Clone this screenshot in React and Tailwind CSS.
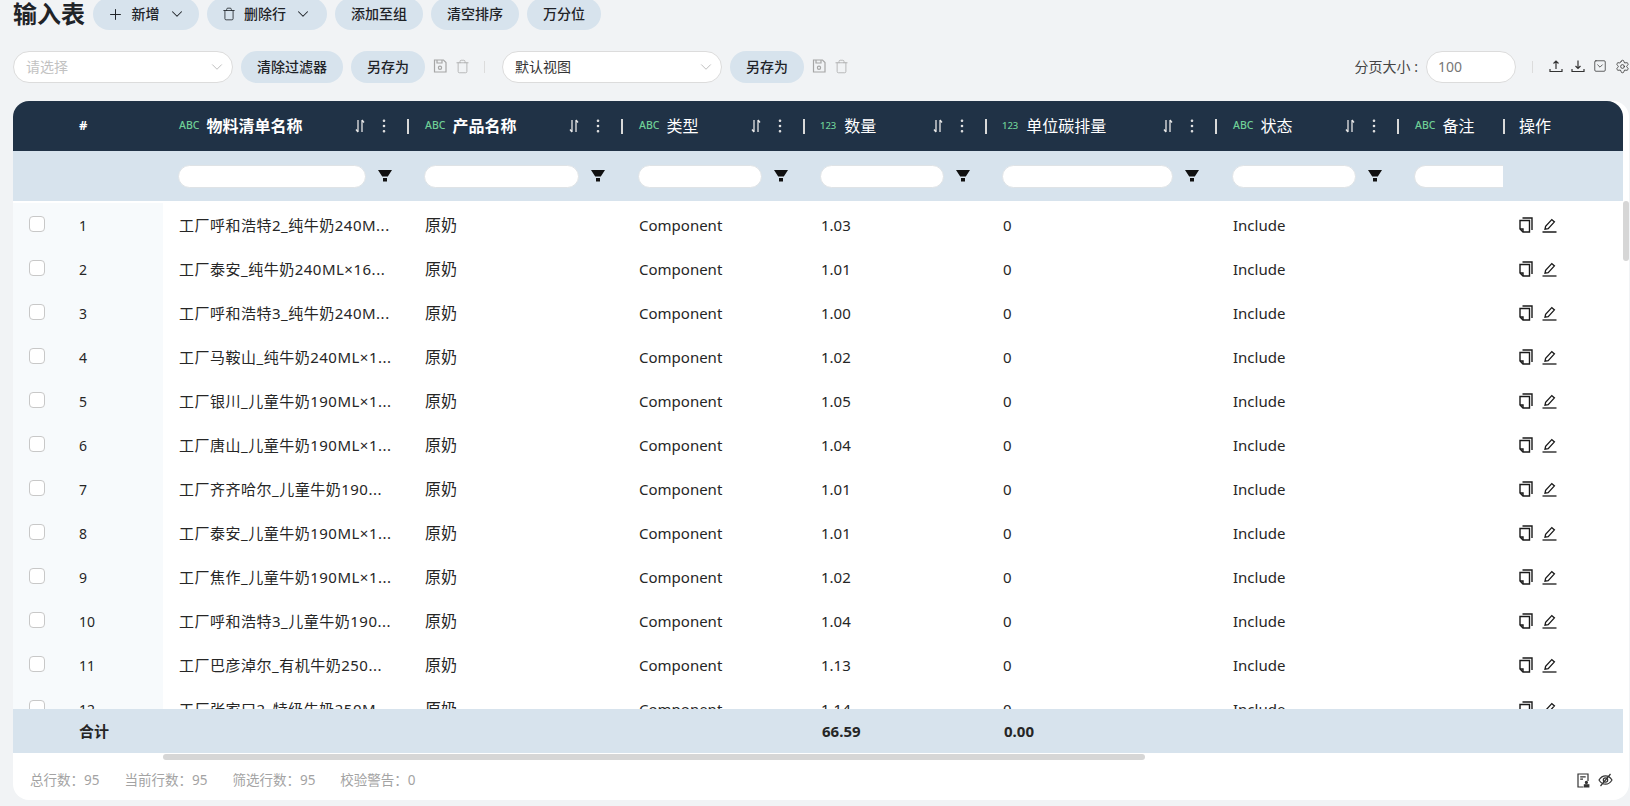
import { Plus, ChevronDown, Trash, SquareChevronDown, Settings, EllipsisVertical } from 'lucide-react';

const font = "font-['Noto_Sans','Noto_Sans_CJK_SC',sans-serif]";

const columns = [
  { name: '物料清单名称', tag: 'ABC', width: 'w-[246px]', input: 'w-[188px]', bold: true },
  { name: '产品名称', tag: 'ABC', width: 'w-[214px]', input: 'w-[155px]', bold: true },
  { name: '类型', tag: 'ABC', width: 'w-[182px]', input: 'w-[124px]' },
  { name: '数量', tag: '123', width: 'w-[182px]', input: 'w-[124px]' },
  { name: '单位碳排量', tag: '123', width: 'w-[230px]', input: 'w-[171px]' },
  { name: '状态', tag: 'ABC', width: 'w-[182px]', input: 'w-[124px]' },
];

const rows = [
  ['工厂呼和浩特2_纯牛奶240M...', '1.03'],
  ['工厂泰安_纯牛奶240ML×16...', '1.01'],
  ['工厂呼和浩特3_纯牛奶240M...', '1.00'],
  ['工厂马鞍山_纯牛奶240ML×1...', '1.02'],
  ['工厂银川_儿童牛奶190ML×1...', '1.05'],
  ['工厂唐山_儿童牛奶190ML×1...', '1.04'],
  ['工厂齐齐哈尔_儿童牛奶190...', '1.01'],
  ['工厂泰安_儿童牛奶190ML×1...', '1.01'],
  ['工厂焦作_儿童牛奶190ML×1...', '1.02'],
  ['工厂呼和浩特3_儿童牛奶190...', '1.04'],
  ['工厂巴彦淖尔_有机牛奶250...', '1.13'],
  ['工厂张家口2_特级牛奶250M...', '1.14'],
];

const SaveIcon = () => (
  <svg width="14" height="14" viewBox="0 0 14 14" fill="none" stroke="currentColor" strokeWidth="1.2">
    <path d="M1.5 1h9l2.5 2.5V13H1.500z" />
    <path d="M4 1v3h5V1" />
    <circle cx="7" cy="8.700" r="1.600" />
  </svg>
);

const UploadIcon = () => (
  <svg width="14" height="14" viewBox="0 0 14 14" fill="none" stroke="currentColor" strokeWidth="1.2">
    <path d="M7 10V2M4.500 4.500 7 2l2.500 2.500M1 10v2.500h12V10" />
  </svg>
);

const DownloadIcon = () => (
  <svg width="14" height="14" viewBox="0 0 14 14" fill="none" stroke="currentColor" strokeWidth="1.2">
    <path d="M7 1.500v8M4.500 7 7 9.500 9.500 7M1 10v2.500h12V10" />
  </svg>
);

const SortIcon = () => (
  <svg width="12" height="14" viewBox="0 0 12 14" fill="none" stroke="#e6e6e6" strokeWidth="1.300">
    <path d="M4 1v12M4 13l-2-2.500M8 13V1M8 1l2 2.500" />
  </svg>
);

const FunnelIcon = () => (
  <svg width="14" height="12" viewBox="0 0 14 12" fill="#111">
    <path d="M0 0h14L9.800 6.500H4.200zM5 8h4v3.500H5z" />
  </svg>
);

const CopyIcon = () => (
  <svg width="14" height="16" viewBox="0 0 14 16" fill="none" stroke="#1a1a1a" strokeWidth="1.400">
    <path d="M3.500 1H13v12M1 3.500h9.500V15H4l-3-3z" />
    <path d="M1 12h3v3" />
  </svg>
);

const EditIcon = () => (
  <svg width="15" height="15" viewBox="0 0 15 15" fill="none" stroke="#1a1a1a" strokeWidth="1.300">
    <path d="M0.500 14h14" />
    <path d="M3 11.200 3.600 8.400 9.800 1.600l2.600 2.300-6.200 6.700z" />
  </svg>
);

const StampIcon = () => (
  <svg width="13" height="15" viewBox="0 0 13 15" fill="none" stroke="#333" strokeWidth="1.200">
    <path d="M6.500 14H1V1h10v7" />
    <path d="M3.200 3.800h5.500M3.200 6.200h2.800" />
    <circle cx="9.400" cy="9.400" r="1" fill="#333" />
    <path d="M7.400 11.800h4.400V14H7.400z" fill="#333" />
  </svg>
);

const HideIcon = () => (
  <svg width="15" height="14" viewBox="0 0 15 14" fill="none" stroke="#333" strokeWidth="1.200">
    <path d="M1 7c1.700-2.800 3.800-4.200 6.500-4.200S12.300 4.200 14 7c-1.700 2.800-3.800 4.200-6.500 4.200S2.700 9.800 1 7z" />
    <circle cx="7.500" cy="7" r="2.200" />
    <path d="M12.500 1 2.500 13" />
  </svg>
);

function PillButton({ children, className = '' }) {
  return (
    <button className={`h-8 rounded-2xl bg-[#d7e3ed] text-sm font-medium text-[#1f2328] flex items-center justify-center shrink-0 ${className}`}>
      {children}
    </button>
  );
}

function SelectBox({ text, muted, className = '' }) {
  return (
    <div className={`h-8 rounded-2xl bg-white border border-[#dcdcdc] flex items-center justify-between pl-3 pr-[6px] shrink-0 ${className}`}>
      <span className={`text-sm ${muted ? 'text-[#c2c2c2]' : 'text-[#333]'}`}>{text}</span>
      <ChevronDown size={18} strokeWidth={1} className="text-[#aaa]" />
    </div>
  );
}

function Tag({ label }) {
  if (label === 'ABC') {
    return <span className="text-[10.500px] font-medium text-[#6fcf97] mr-[7px]">ABC</span>;
  }
  return <span className="text-[9.500px] font-medium text-[#6fcf97] mr-2 -ml-px">{label}</span>;
}

function HeaderCell({ col }) {
  return (
    <div className={`${col.width} h-full shrink-0 flex items-center pl-4 relative`}>
      <Tag label={col.tag} />
      <span className={`text-base text-white ${col.bold ? 'font-bold' : ''}`}>{col.name}</span>
      <div className="absolute right-0 inset-y-0 flex items-center gap-[9px]">
        <SortIcon />
        <EllipsisVertical size={18} strokeWidth={1.5} className="text-[#e6e6e6]" />
        <div className="w-[2px] h-[15px] bg-[#d9d9d9] ml-[5px]" />
      </div>
    </div>
  );
}

function FilterCell({ col }) {
  return (
    <div className={`${col.width} shrink-0 flex items-center pl-[15px] gap-3`}>
      <div className={`${col.input} h-[23px] rounded-full bg-white border border-[#dfe3e6]`} />
      <FunnelIcon />
    </div>
  );
}

function Row({ name, qty, index }) {
  return (
    <div className="h-11 flex items-center text-[15px] text-[#262626] shrink-0">
      <div className="w-[150px] h-full bg-[#f7fafc] flex items-center pl-4 shrink-0">
        <div className="w-4 h-4 rounded-[4px] border border-[#c8c8c8] bg-white -mt-[2px]" />
        <span className="ml-[34px] mt-[1px] text-sm">{index}</span>
      </div>
      <div className="w-[246px] pl-4 shrink-0 whitespace-nowrap overflow-hidden tracking-[0.5px]">{name}</div>
      <div className="w-[214px] pl-4 shrink-0 text-base">原奶</div>
      <div className="w-[182px] pl-4 shrink-0">Component</div>
      <div className="w-[182px] pl-4 shrink-0">{qty}</div>
      <div className="w-[230px] pl-4 shrink-0">0</div>
      <div className="w-[182px] pl-4 shrink-0">Include</div>
      <div className="w-[104px] shrink-0" />
      <div className="flex items-center gap-[9px] pl-4">
        <CopyIcon />
        <EditIcon />
      </div>
    </div>
  );
}

export default function App() {
  return (
    <div className={`${font} w-[1630px] h-[806px] bg-[#f1f3f5] overflow-hidden flex flex-col pl-[13px]`}>
      {/* top actions */}
      <div className="h-8 -mt-[2px] flex items-center gap-2 shrink-0">
        <h1 className="text-2xl leading-7 font-bold text-[#1f2328] whitespace-nowrap">输入表</h1>
        <PillButton className="w-[106px] gap-2">
          <Plus size={17} strokeWidth={1.4} />
          <span>新增</span>
          <ChevronDown size={18} strokeWidth={1.4} />
        </PillButton>
        <PillButton className="w-[120px] gap-2">
          <Trash size={14} strokeWidth={1.4} />
          <span>删除行</span>
          <ChevronDown size={18} strokeWidth={1.4} />
        </PillButton>
        <PillButton className="w-[88px]">添加至组</PillButton>
        <PillButton className="w-[88px]">清空排序</PillButton>
        <PillButton className="w-[74px]">万分位</PillButton>
      </div>

      {/* filters */}
      <div className="h-8 mt-[21px] flex items-center shrink-0">
        <SelectBox text="请选择" muted className="w-[220px]" />
        <PillButton className="w-[102px] ml-2">清除过滤器</PillButton>
        <PillButton className="w-[74px] ml-2">另存为</PillButton>
        <div className="flex items-center gap-2 ml-2 -mt-[2px] text-[#a6a6a6]">
          <SaveIcon />
          <Trash size={15} strokeWidth={1.2} />
        </div>
        <div className="w-px h-3 bg-[#dcdcdc] ml-[14px]" />
        <SelectBox text="默认视图" className="w-[220px] ml-[17px]" />
        <PillButton className="w-[74px] ml-2">另存为</PillButton>
        <div className="flex items-center gap-2 ml-2 -mt-[2px] text-[#a6a6a6]">
          <SaveIcon />
          <Trash size={15} strokeWidth={1.2} />
        </div>
        <div className="flex-1" />
        <span className="text-sm text-[#444]">分页大小 :</span>
        <div className="w-[90px] h-8 rounded-2xl bg-white border border-[#dcdcdc] flex items-center pl-[11px] ml-2 text-sm text-[#777]">100</div>
        <div className="w-px h-3 bg-[#dcdcdc] ml-4" />
        <div className="flex items-center gap-2 ml-4 pr-[1px] -mt-[2px] text-[#333]">
          <UploadIcon />
          <DownloadIcon />
          <SquareChevronDown size={14} strokeWidth={1.3} />
          <Settings size={15} strokeWidth={1.3} className="-mr-px" />
        </div>
      </div>

      {/* table card */}
      <div className="mt-[18px] w-[1616px] h-[699px] bg-white rounded-2xl flex flex-col overflow-hidden shrink-0">
        <div className="w-[1610px] h-[50px] bg-[#203246] flex items-center shrink-0 rounded-tr-2xl">
          <div className="w-[150px] shrink-0 pl-[66px] text-[13px] font-bold text-white">#</div>
          {columns.map((col) => (
            <HeaderCell key={col.name} col={col} />
          ))}
          <div className="w-[104px] h-full shrink-0 flex items-center pl-4 relative">
            <Tag label="ABC" />
            <span className="text-base text-white">备注</span>
            <div className="absolute -right-[2px] inset-y-0 flex items-center">
              <div className="w-[2px] h-[15px] bg-[#d9d9d9]" />
            </div>
          </div>
          <span className="ml-4 text-base text-white">操作</span>
        </div>

        <div className="w-[1610px] h-[50px] bg-[#d7e3ed] flex items-center shrink-0">
          <div className="w-[150px] shrink-0" />
          {columns.map((col) => (
            <FilterCell key={col.name} col={col} />
          ))}
          <div className="w-[89px] h-[23px] ml-[15px] rounded-l-full bg-white border-y border-l border-[#dfe3e6]" />
        </div>

        <div className="flex-1 min-h-0 flex">
          <div className="w-[1610px] overflow-hidden flex flex-col pt-[2px] bg-white">
            {rows.map((r, i) => (
              <Row key={i} name={r[0]} qty={r[1]} index={i + 1} />
            ))}
          </div>
          <div className="w-[6px] shrink-0">
            <div className="h-[60px] rounded-full bg-[#d6d6d6]" />
          </div>
        </div>

        <div className="w-[1610px] h-11 bg-[#d7e3ed] flex items-center shrink-0 text-[15px] font-bold text-[#262626]">
          <div className="w-[66px] shrink-0" />
          <div className="w-[743px] shrink-0">合计</div>
          <div className="w-[182px] shrink-0">66.59</div>
          <div>0.00</div>
        </div>
        <div className="h-[7px] pl-[150px] pt-[1px] shrink-0">
          <div className="w-[982px] h-[6px] rounded-full bg-[#d6d6d6]" />
        </div>

        <div className="h-10 shrink-0 flex items-center pl-[17px] pr-[16px] text-[13.500px] text-[#a3a3a3]">
          <span className="mr-[25px]">总行数：95</span>
          <span className="mr-[25px]">当前行数：95</span>
          <span className="mr-[25px]">筛选行数：95</span>
          <span>校验警告：0</span>
          <div className="flex-1" />
          <div className="flex items-center gap-2 text-[#333]">
            <StampIcon />
            <HideIcon />
          </div>
        </div>
      </div>
    </div>
  );
}
